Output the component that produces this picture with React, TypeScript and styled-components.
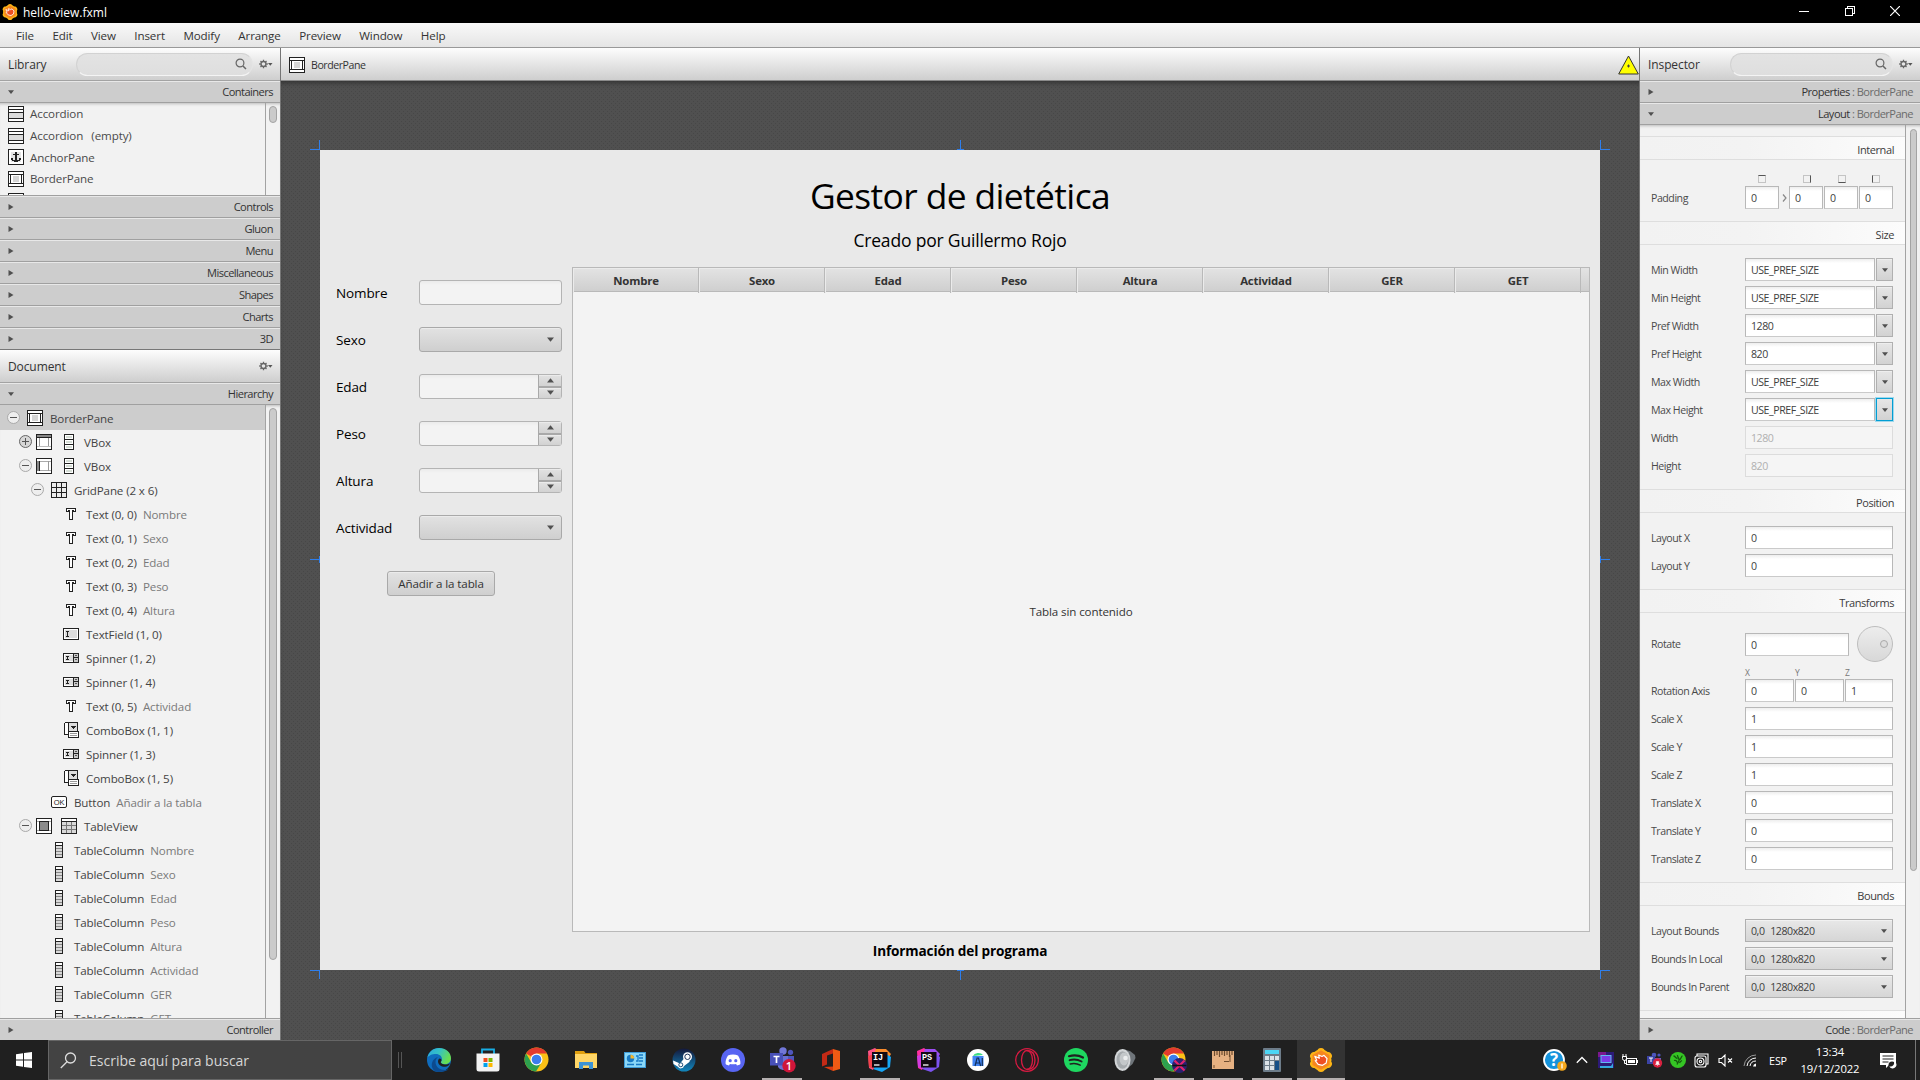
import React from "react";
import styled, { createGlobalStyle, css } from "styled-components";

const Global = createGlobalStyle`
  * { box-sizing: border-box; }
  html, body { margin: 0; padding: 0; overflow: hidden; }
  body { font-family: "Segoe UI", "Open Sans", "Noto Sans", sans-serif; color: #333; }
  svg { display: block; flex: none; }
`;

const regular = css`font-size: 11.6px; letter-spacing: -0.12px; white-space: pre;`;
const small = css`font-size: 10.6px; letter-spacing: -0.46px; white-space: pre;`;

/* ---------- shell ---------- */
const Screen = styled.div`width: 1920px; height: 1080px; display: flex; flex-direction: column; overflow: hidden; background: #f2f2f2;`;
const TitleBar = styled.div`height: 23px; background: #000; color: #fff; display: flex; align-items: center; padding: 0 2px; flex: none;`;
const WindowTitle = styled.span`font-size: 12px; letter-spacing: 0; margin-left: 5px; flex: 1; padding-top: 1px;`;
const WindowButton = styled.div`width: 45.5px; height: 23px; display: flex; align-items: center; justify-content: center; padding-bottom: 2px;`;
const MenuBar = styled.div`height: 25px; flex: none; display: flex; align-items: center; gap: 18.5px; padding: 1px 0 0 16px; background: linear-gradient(#f9f9f9, #e5e5e5); border-bottom: 1px solid #999; ${regular}`;
const Workspace = styled.div`height: 992px; display: flex; flex: none; overflow: hidden;`;
const LeftPanel = styled.div`width: 281px; border-right: 1px solid #757575; display: flex; flex-direction: column; background: #f2f2f2;`;
const CenterPanel = styled.div`width: 1358px; display: flex; flex-direction: column;`;
const RightPanel = styled.div`width: 281px; border-left: 1px solid #757575; display: flex; flex-direction: column; background: #f2f2f2;`;

const PanelHead = styled.div`height: 33px; flex: none; display: flex; align-items: center; padding: 0 7px 0 8px; background: linear-gradient(#fdfdfd, #cecece); border-bottom: 1px solid #a3a3a3; font-size: 12px; letter-spacing: -0.1px;`;
const HeadName = styled.span<{ $w: number }>`width: ${p => p.$w}px; padding-top: 1px;`;
const SearchBox = styled.div<{ $w: number }>`width: ${p => p.$w}px; height: 23px; margin-right: 6px; border-radius: 12px; border: 1px solid #d2d2d2; border-bottom-color: #f4f4f4; border-right-color: #e4e4e4; background: linear-gradient(#e3e3e3, #dedede); display: flex; align-items: center; justify-content: flex-end; padding: 0 5px 1px 0;`;
const Spacer = styled.div`flex: 1;`;

const Fold = styled.div<{ $dark?: boolean }>`height: 22px; flex: none; display: flex; align-items: center; justify-content: space-between; padding: 0 7px 1px 8px; background: #cdcdcd; border-top: 1px solid #e8e8e8; border-bottom: 1px solid ${p => (p.$dark ? "#777" : "#a0a0a0")}; font-size: 11.1px; line-height: 18px; letter-spacing: -0.55px; white-space: pre;`;
const Muted = styled.span`color: #6b6b6b;`;

const ScrollArea = styled.div<{ $h: number }>`height: ${p => p.$h}px; flex: none; display: flex; overflow: hidden; border-bottom: 1px solid #a0a0a0; box-shadow: inset 0 3px 3px -2px #bbb;`;
const ScrollContent = styled.div`flex: 1; overflow: hidden; border-right: 1px solid #a3a3a3;`;
const ScrollTrack = styled.div<{ $w: number; $top: number }>`width: ${p => p.$w}px; flex: none; display: flex; justify-content: center; padding-top: ${p => p.$top}px;`;
const Thumb = styled.div<{ $h: number; $w: number }>`width: ${p => p.$w}px; height: ${p => p.$h}px; border: 1px solid #a3a3a3; border-radius: 4px; background: #cbcbcb;`;

const LibraryList = styled.div`padding: 0 0 0 8px;`;
const LibraryRow = styled.div`height: 21.7px; display: flex; align-items: center; gap: 6px; color: #4a4a4a; word-spacing: 1.2px; ${regular}`;
const TreeRow = styled.div<{ $x: number; $sel?: boolean }>`height: ${p => (p.$sel ? 25 : 24)}px; padding-left: ${p => p.$x}px; display: flex; align-items: center; background: ${p => (p.$sel ? "#cdcdcd" : "transparent")}; color: #444; ${regular}`;
const TreeText = styled.span`margin-left: 7px; padding-top: 1px;`;
const TreeSub = styled.span`color: #7a7a7a; margin-left: 6px; padding-top: 1px;`;
const Gap = styled.span<{ $w: number }>`width: ${p => p.$w}px; flex: none;`;
const Disclosure = styled.span<{ $strong?: boolean }>`width: 13px; height: 13px; flex: none; border-radius: 50%; border: 1px solid ${p => (p.$strong ? "#666" : "#aaa")}; background: ${p => (p.$strong ? "#d6d6d6" : "#eee")}; display: flex; align-items: center; justify-content: center; margin-bottom: 1px;`;

/* ---------- canvas ---------- */
const Crumbs = styled.div`height: 33px; flex: none; display: flex; align-items: center; padding: 1px 0 0 8px; background: linear-gradient(#fdfdfd, #cecece); border-bottom: 1px solid #8a8a8a; gap: 6px; ${small}`;
const Backdrop = styled.div`flex: 1; display: flex; align-items: center; justify-content: center; padding-bottom: 1px;
  background-color: #505050;
  background-image: linear-gradient(#464646, #464646), linear-gradient(#464646, #464646);
  background-size: 4px 4px; background-position: 0 0, 2px 2px;
  background-image: radial-gradient(circle at 0.5px 0.5px, #474747 0.6px, transparent 0.7px), radial-gradient(circle at 0.5px 0.5px, #474747 0.6px, transparent 0.7px);
  box-shadow: inset 0 5px 5px -3px #333;`;
const Stage = styled.div`width: 1280px; height: 820px; position: relative; background: #e9e9e9; color: #000; padding: 19px 10px 0; display: flex; flex-direction: column; align-items: stretch;`;
const Mark = styled.i<{ $x: number; $y: number; $w: number; $h: number }>`position: absolute; left: ${p => p.$x}px; top: ${p => p.$y}px; width: ${p => p.$w}px; height: ${p => p.$h}px; background: #2f7fec;`;
const Title = styled.div`height: 53px; line-height: 52px; text-align: center; font-size: 35.4px; letter-spacing: -0.62px;`;
const Subtitle = styled.div`height: 45px; line-height: 37px; text-align: center; font-size: 17.5px; letter-spacing: -0.18px;`;
const Body = styled.div`display: flex; height: 665px; flex: none;`;
const Side = styled.div`width: 242px; padding: 13px 0 0 6px; display: flex; flex-direction: column; align-items: flex-start;`;
const FormGrid = styled.div`display: grid; grid-template-columns: 83px 143px; row-gap: 22px; align-items: center;`;
const FormLabel = styled.span`font-size: 13.5px; letter-spacing: -0.13px; padding-top: 1px;`;
const fieldBase = css`height: 25px; border: 1px solid #b4b4b4; border-radius: 3px; display: flex;`;
const FormInput = styled.div`${fieldBase} background: linear-gradient(#ebebeb, #f3f3f3 4px);`;
const FormCombo = styled.div`${fieldBase} border-color: #a9a9a9; background: linear-gradient(#e2e2e2, #cfcfcf); box-shadow: inset 0 1px 0 #ebebeb; align-items: center; justify-content: flex-end; padding-right: 7px;`;
const FormSpinner = styled(FormInput)`justify-content: flex-end;`;
const SpinButtons = styled.div`width: 23px; display: flex; flex-direction: column; border-left: 1px solid #a9a9a9;`;
const SpinHalf = styled.div`flex: 1; display: flex; align-items: center; justify-content: center; background: linear-gradient(#e2e2e2, #d2d2d2); box-shadow: inset 0 1px 0 #ebebeb; &:first-child { border-bottom: 2px solid #a9a9a9; }`;
const AddButton = styled.div`width: 108px; height: 25px; margin: 31px 0 0 51px; border: 1px solid #a9a9a9; border-radius: 3px; background: linear-gradient(#e2e2e2, #cfcfcf); box-shadow: inset 0 1px 0 #ebebeb; display: flex; align-items: center; justify-content: center; color: #333; ${regular}`;
const Table = styled.div`width: 1018px; border: 1px solid #b9b9b9; background: #f3f3f3; display: flex; flex-direction: column;`;
const TableHead = styled.div`height: 24px; display: grid; grid-template-columns: repeat(8, 126px) 8px; background: linear-gradient(#e3e3e3, #cfcfcf); border-bottom: 1px solid #b9b9b9;`;
const TableHeadCell = styled.div`border-right: 1px solid #b9b9b9; box-shadow: inset 1px 1px 0 #ebebeb; text-align: center; font-weight: 700; color: #333; line-height: 25px; padding-left: 1px; font-size: 11.4px; letter-spacing: -0.2px;`;
const TableBody = styled.div`flex: 1; display: flex; align-items: center; justify-content: center; color: #333; ${regular}`;
const Footer = styled.div`height: 38px; line-height: 38px; text-align: center; font-weight: 700; font-size: 13.6px; letter-spacing: -0.15px;`;

/* ---------- inspector ---------- */
const Section = styled.div<{ $h: number }>`height: ${p => p.$h}px; border: solid #dedede; border-width: 1px 0; background: linear-gradient(90deg, #f2f2f2, #f3f3f3 40%, #fcfcfc); display: flex; align-items: center; justify-content: flex-end; padding: 2px 11px 0 0; font-size: 11px; letter-spacing: -0.42px; color: #3c3c3c;`;
const Group = styled.div<{ $top: number; $bottom: number; $gap: number }>`padding: ${p => p.$top}px 12px ${p => p.$bottom}px 11px; display: flex; flex-direction: column; gap: ${p => p.$gap}px;`;
const Prop = styled.div<{ $h?: number }>`height: ${p => p.$h ?? 23}px; display: grid; grid-template-columns: 94px 148px; align-items: center; color: #4a4a4a; ${small}`;
const PropValue = styled.div<{ $gap?: number }>`display: flex; gap: ${p => p.$gap ?? 1}px; align-items: center; height: 100%;`;
const PropInput = styled.div<{ $w?: number; $off?: boolean }>`width: ${p => (p.$w ? p.$w + "px" : "100%")}; height: 23px; flex: none; display: flex; align-items: center; padding: 1px 0 0 5px; border: 1px solid ${p => (p.$off ? "#dcdcdc" : "#b8b8b8")}; border-bottom-color: ${p => (p.$off ? "#dcdcdc" : "#cacaca")}; background: ${p => (p.$off ? "#f5f5f5" : "linear-gradient(#eee, #fff 4px)")}; color: ${p => (p.$off ? "#b0b0b0" : "#404040")};`;
const DropButton = styled.div<{ $focus?: boolean }>`width: 17px; height: 23px; display: flex; align-items: center; justify-content: center; border: 1px solid ${p => (p.$focus ? "#039ed3" : "#b0b0b0")}; box-shadow: ${p => (p.$focus ? "0 0 0 1px #9fd8ec" : "inset 0 1px 0 #eee")}; background: linear-gradient(#e6e6e6, #d2d2d2);`;
const BoundsCombo = styled.div`width: 148px; height: 23px; border: 1px solid #b0b0b0; background: linear-gradient(#e8e8e8, #d6d6d6); box-shadow: inset 0 1px 0 #f2f2f2; display: flex; align-items: center; justify-content: space-between; padding: 1px 5px 0; color: #404040; word-spacing: 0.6px;`;
const SideIcons = styled.div`height: 8px; display: grid; grid-template-columns: 45px 35px 34px 8px; padding-left: 107px; margin-bottom: 3px;`;
const SideIcon = styled.span<{ $side: "top" | "right" | "bottom" | "left" }>`width: 8px; height: 8px; border: 1px solid #c4c4c4; border-${p => p.$side}-color: #555;`;
const Chevron = styled.span`width: 8px; color: #777; display: flex; justify-content: center;`;
const Knob = styled.div`width: 36px; height: 36px; margin-left: 7px; border-radius: 50%; border: 1px solid #bdbdbd; background: linear-gradient(#ededed, #d8d8d8); display: flex; align-items: center; justify-content: flex-end; padding-right: 4px; flex: none;`;
const KnobDot = styled.span`width: 8px; height: 8px; border: 1px solid #aaa; border-radius: 50%; background: #ddd;`;
const AxisNames = styled.div`display: grid; grid-template-columns: 50px 50px 48px; padding-left: 94px; height: 12px; font-size: 8.5px; line-height: 12px; color: #777;`;

/* ---------- taskbar ---------- */
const Taskbar = styled.div`height: 40px; flex: none; display: flex; background: #202020; color: #fff;`;
const StartButton = styled.div`width: 48px; display: flex; align-items: center; justify-content: center;`;
const TaskSearch = styled.div`width: 344px; display: flex; align-items: center; gap: 12px; padding-left: 11px; background: #434343; border: 1px solid #666; color: #d6d6d6; font-size: 14px; letter-spacing: 0; white-space: nowrap;`;
const Grip = styled.div`width: 4px; height: 16px; margin: 12px 13px 0 6px; border: solid #555; border-width: 0 1px;`;
const TaskItem = styled.div<{ $open?: boolean; $active?: boolean }>`width: 49px; padding-right: 1px; display: flex; align-items: center; justify-content: center; background: ${p => (p.$active ? "linear-gradient(90deg,#333 48px,transparent 48px)" : "none")};
  position: relative;
  &::after { content: ""; display: ${p => (p.$open ? "block" : "none")}; position: absolute; bottom: 0; left: ${p => (p.$active ? 0 : 4)}px; width: ${p => (p.$active ? 48 : 40)}px; height: 2px; background: #b5b0b0; }`;
const Tray = styled.div`margin-left: auto; display: flex; align-items: center;`;
const TrayItem = styled.div<{ $w: number }>`width: ${p => p.$w}px; display: flex; align-items: center; justify-content: center;`;
const Lang = styled.span`width: 30px; font-size: 10.8px; letter-spacing: -0.2px; text-align: center;`;
const Clock = styled.div`width: 70px; margin: 0 7px 0 2px; text-align: center; font-size: 11.3px; letter-spacing: -0.1px; line-height: 17px;`;
const DesktopEdge = styled.div`width: 5px; height: 40px; border-left: 1px solid #777;`;

/* ---------- icons ---------- */
const K = "#222";
const Px = ({ children, s = 16 }: { children: React.ReactNode; s?: number }) => (
  <svg width={s} height={s} viewBox={`0 0 ${s} ${s}`} shapeRendering="crispEdges">{children}</svg>
);
const Box = (p: { x: number; y: number; w: number; h: number; f?: string; c?: string }) => (
  <rect x={p.x + 0.5} y={p.y + 0.5} width={p.w - 1} height={p.h - 1} fill={p.f ?? "#fff"} stroke={p.c ?? K} />
);
const R = (p: { x: number; y: number; w: number; h: number; f?: string }) => <rect x={p.x} y={p.y} width={p.w} height={p.h} fill={p.f ?? K} />;

const icons: Record<string, React.ReactNode> = {
  accordion: <Px><Box x={0} y={0} w={16} h={16} /><R x={1} y={3} w={14} h={1} /><R x={1} y={6} w={14} h={1} /><R x={1} y={7} w={14} h={5} f="#dcdcdc" /><R x={1} y={12} w={14} h={1} /></Px>,
  anchor: <Px><Box x={0} y={0} w={16} h={16} /><R x={3} y={3} w={10} h={10} f="#e4e4e4" /><R x={7} y={3} w={2} h={10} /><R x={5} y={5} w={6} h={1} /><R x={3} y={9} w={2} h={2} /><R x={11} y={9} w={2} h={2} /><R x={4} y={11} w={3} h={1} /><R x={9} y={11} w={3} h={1} /><R x={6} y={12} w={4} h={1} /></Px>,
  border: <Px><Box x={0} y={0} w={16} h={16} /><R x={1} y={3} w={14} h={1} /><R x={1} y={12} w={14} h={1} /><R x={2} y={3} w={1} h={10} /><R x={13} y={3} w={1} h={10} /><R x={5} y={5} w={6} h={6} f="#d5d5d5" /></Px>,
  top: <Px><Box x={0} y={0} w={16} h={16} /><R x={1} y={1} w={14} h={3} f="#888" /><R x={1} y={3} w={14} h={1} /><R x={3} y={4} w={1} h={9} f="#999" /><R x={12} y={4} w={1} h={9} f="#999" /><R x={1} y={12} w={14} h={1} f="#bbb" /></Px>,
  left: <Px><Box x={0} y={0} w={16} h={16} /><R x={1} y={3} w={14} h={1} f="#aaa" /><R x={1} y={12} w={14} h={1} f="#aaa" /><R x={1} y={3} w={3} h={10} f="#888" /><R x={3} y={3} w={1} h={10} /><R x={12} y={3} w={1} h={10} f="#999" /></Px>,
  center: <Px><Box x={0} y={0} w={16} h={16} /><R x={1} y={3} w={14} h={1} f="#aaa" /><R x={1} y={12} w={14} h={1} f="#aaa" /><Box x={3} y={3} w={10} h={10} f="#8c8c8c" /></Px>,
  vbox: <Px><Box x={3} y={0} w={10} h={16} /><R x={3} y={5} w={10} h={1} /><R x={3} y={10} w={10} h={1} /><R x={5} y={2} w={6} h={2} f="#d5ddd5" /><R x={5} y={7} w={6} h={2} f="#d5ddd5" /><R x={5} y={12} w={6} h={2} f="#d5ddd5" /></Px>,
  grid: <Px><Box x={0} y={0} w={16} h={16} f="#ececec" /><R x={5} y={0} w={1} h={16} /><R x={10} y={0} w={1} h={16} /><R x={0} y={5} w={16} h={1} /><R x={0} y={10} w={16} h={1} /></Px>,
  text: <Px><path d="M3.5 2.5h9v3h-2v-1h-1v9h-3v-9h-1v1h-2z" fill="#fff" stroke={K} /></Px>,
  field: <Px><Box x={0} y={2} w={16} h={12} /><R x={2} y={4} w={12} h={8} f="#dcdcdc" /><R x={3} y={5} w={3} h={1} /><R x={4} y={5} w={1} h={6} /><R x={3} y={10} w={3} h={1} /></Px>,
  spinner: <Px><Box x={0} y={3} w={16} h={10} /><R x={2} y={5} w={8} h={6} f="#dcdcdc" /><R x={3} y={6} w={3} h={1} /><R x={4} y={6} w={1} h={4} /><R x={3} y={9} w={3} h={1} /><R x={10} y={4} w={1} h={8} /><R x={11} y={4} w={4} h={8} f="#c8c8c8" /><R x={11} y={7} w={4} h={1} /><R x={12} y={5} w={2} h={1} f="#555" /><R x={12} y={9} w={2} h={1} f="#555" /></Px>,
  combo: <Px><rect x="1.5" y=".5" width="13" height="12" rx="1.5" fill="#fff" stroke={K} /><R x={6} y={1} w={8} h={9} f="#ddd" /><R x={5} y={1} w={1} h={12} /><path d="M8 4h5l-2.500 3.500z" fill={K} /><Box x={5} y={9} w={11} h={7} /><R x={7} y={11} w={7} h={1} f="#999" /><R x={7} y={13} w={7} h={1} f="#999" /></Px>,
  button: <svg width="16" height="16"><rect x=".5" y="2.500" width="15" height="11" rx="1.500" fill="#fff" stroke={K} /><text x="8" y="11" fontSize="7.500" textAnchor="middle" fill={K} fontFamily="Liberation Sans">OK</text></svg>,
  table: <Px><Box x={0} y={0} w={16} h={16} f="#d8d8d8" /><R x={1} y={1} w={14} h={3} f="#fff" /><R x={1} y={3} w={14} h={1} /><R x={1} y={7} w={14} h={1} f="#777" /><R x={1} y={11} w={14} h={1} f="#777" /><R x={5} y={4} w={1} h={11} f="#777" /><R x={10} y={4} w={1} h={11} f="#777" /></Px>,
  column: <Px><Box x={4} y={0} w={8} h={16} f="#d8d8d8" /><R x={5} y={1} w={6} h={2} f="#fff" /><R x={5} y={3} w={6} h={1} /><R x={5} y={6} w={6} h={1} f="#888" /><R x={5} y={9} w={6} h={1} f="#888" /><R x={5} y={12} w={6} h={1} f="#888" /></Px>,
};

const Arrow = ({ dir, s = 6, c = "#505050" }: { dir: "down" | "up" | "right"; s?: number; c?: string }) => (
  <svg width={s} height={s} viewBox="0 0 6 6"><path fill={c} d={dir === "down" ? "M0 1.200h6L3 4.900z" : dir === "up" ? "M0 4.800h6L3 1.100z" : "M.5 0v6l5-3z"} /></svg>
);
const Magnifier = () => <svg width="12" height="12" viewBox="0 0 12 12" fill="none" stroke="#666"><circle cx="5" cy="5" r="3.900" strokeWidth="1.200" /><path d="M8 8l3 3" strokeWidth="1.500" /></svg>;
const Gear = () => (
  <svg width="14" height="10" viewBox="0 0 14 10"><circle cx="4.500" cy="5" r="2.500" fill="none" stroke="#666" strokeWidth="1.400" /><path d="M4.500.700v1.400M4.500 7.900v1.400M.2 5h1.400M7.400 5h1.400M1.500 2l1 1M6.500 7l1 1M7.500 2l-1 1M2.500 7l-1 1" stroke="#666" strokeWidth="1.300" /><path d="M9 4h4.500l-2.200 2.800z" fill="#555" /></svg>
);
const SceneIcon = ({ s }: { s: number }) => (
  <svg width={s} height={s} viewBox="0 0 24 24">
    <g fill="#fdb515"><circle cx="12" cy="12" r="10.500" />{[0, 60, 120, 180, 240, 300].map(a => <circle key={a} cx="12" cy="3.800" r="3.800" transform={`rotate(${a} 12 12)`} />)}</g>
    <path d="M12 2.200l8.500 4.900v9.800L12 21.800l-8.500-4.900V7.100z" fill="#f6861f" />
    <path d="M5.800 8.300l4.500 2-.6-3.300 3.300 1.500 2-1.200 3 3.200-.8 4.500-3.700 2.300-4.300-1-3-3.600 1.600-.5z" fill="#ee4f23" stroke="#fff" strokeWidth="1.200" strokeLinejoin="round" />
  </svg>
);

/* ---------- taskbar drawings ---------- */
const Chrome = ({ badge }: { badge?: boolean }) => (
  <svg width="26" height="26" viewBox="0 0 26 26"><circle cx="12.500" cy="12.500" r="12" fill="#fbc116" /><path d="M12.500 12.500L2.100 6.500A12 12 0 0 1 22.900 6.500H12.500z" fill="#e33b2e" /><path d="M2.100 6.500A12 12 0 0 0 12 24.500L17.500 15.500 12.500 12.500 7.300 15.500z" fill="#2da04e" /><circle cx="12.500" cy="12.500" r="6" fill="#fff" /><circle cx="12.500" cy="12.500" r="4.800" fill="#3b7ded" />
    {badge && <g><circle cx="18.500" cy="18.500" r="7.500" fill="#2b2170" /><path d="M13.500 13.500l10 10M23.500 13.500l-10 10" stroke="#e0246c" strokeWidth="2.200" /><path d="M11.500 18.500h14" stroke="#111" strokeWidth="1.500" /></g>}
  </svg>
);
const JetBrains = ({ t, c }: { t: string; c: string[] }) => (
  <svg width="24" height="24" viewBox="0 0 24 24"><path d="M0 3l7-3 5 4L5 22 1 20z" fill={c[0]} /><path d="M8 1l10 0 5 5-3 5L6 6z" fill={c[1]} /><path d="M17 5l6 4-1 10-8 5-9-3z" fill={c[2]} /><path d="M0 8l6-2v15l-5-2z" fill={c[3]} /><rect x="4" y="4" width="15.500" height="15.500" fill="#120a12" /><text x="5" y="12" fontSize="8.500" fontWeight="700" fill="#fff" fontFamily="Liberation Mono">{t}</text><path d="M6 17h5.500" stroke="#fff" strokeWidth="1.300" /></svg>
);
const taskIcons: { icon: React.ReactNode; open?: boolean; active?: boolean }[] = [
  { icon: <svg width="24" height="24" viewBox="0 0 24 24"><defs><linearGradient id="edgeTop" x1="0" y1="0" x2="1" y2=".4"><stop offset="0" stopColor="#2aa6e0" /><stop offset=".5" stopColor="#35c1c6" /><stop offset="1" stopColor="#67de52" /></linearGradient></defs><circle cx="12" cy="12" r="12" fill="#0f6cbd" /><path d="M.3 10C1.500 4 6 0 12 0c7 0 12 4.800 12 10.200 0 3.600-2.700 6-6 6-2.500 0-4-.9-4-2 0-.8 1-1.300 1-3C15 8.500 12.500 6 9 6 5 6 1.500 7.500.3 10z" fill="url(#edgeTop)" /><path d="M8.500 14c0 5 4.500 8 9 8 2 0 3.500-.7 4.600-1.300C20 23 16 24 12 24 6 24 4 19 5 15c.7-3.500 3.500-5.500 6-6-1.500 1-2.500 3-2.500 5z" fill="#0c4a8e" /><path d="M11 13.500c0-1.200.5-2.500 1.500-3 1.500.3 2 1 2 1.700 0 .8-.8 1.300-.8 2 0 1.200 2 2.300 4.300 2.300 2 0 3.800-.6 4.900-1.300-.5 2-2.500 3.600-4.900 3.600-4 0-7-2.300-7-5.300z" fill="#202020" /></svg> },
  { icon: <svg width="24" height="24" viewBox="0 0 24 24"><path d="M6 7V1.500h12V7" fill="none" stroke="#18aee5" strokeWidth="1.800" /><path d="M.5 5.500h23V21a2.500 2.500 0 0 1-2.500 2.500H3A2.500 2.500 0 0 1 .5 21z" fill="#f3f3f3" /><path d="M7.500 10h4v4h-4z" fill="#f04e1f" /><path d="M12.500 10h4v4h-4z" fill="#7db800" /><path d="M7.500 15h4v4h-4z" fill="#00a1ec" /><path d="M12.500 15h4v4h-4z" fill="#fdb700" /></svg> },
  { icon: <Chrome /> },
  { icon: <svg width="22" height="18" viewBox="0 0 22 18"><path d="M0 0h9l1.500 2H22v5H0z" fill="#e0a010" /><path d="M0 3h22v14H0z" fill="#ffd667" /><path d="M4 18v-7h14v7h-4v-3.500H8V18z" fill="#3d93d4" /></svg> },
  { icon: <svg width="22" height="16" viewBox="0 0 22 16"><rect x=".5" y=".5" width="21" height="15" fill="#8ad7f7" stroke="#3e9cd8" /><circle cx="6.500" cy="6.500" r="3.700" fill="#1779c4" /><path d="M6.500 6.500V2.800a3.700 3.700 0 0 1 3.700 3.700z" fill="#f6b62c" /><path d="M12 4h2v5h-2M15 3h4M15 6h4M15 9h4M3 12.500h7M12 12.500h6" stroke="#1779c4" strokeWidth="1.300" fill="none" /></svg> },
  { icon: <svg width="24" height="24" viewBox="0 0 24 24"><defs><linearGradient id="steam" x1="0" y1="0" x2="0" y2="1"><stop offset="0" stopColor="#14183a" /><stop offset="1" stopColor="#1287bd" /></linearGradient></defs><circle cx="12" cy="12" r="11.500" fill="url(#steam)" /><path d="M1 12.500l7 3 4-5 6 3-6 4.500a3.300 3.300 0 0 1-6 .8L1.500 16z" fill="#fff" /><circle cx="15.500" cy="8.800" r="4.500" fill="#fff" /><circle cx="15.500" cy="8.800" r="2.700" fill="#fff" stroke="#1b3357" /><circle cx="8.800" cy="16.800" r="2" fill="#fff" stroke="#1b4c77" /></svg> },
  { icon: <svg width="24" height="24" viewBox="0 0 24 24"><circle cx="12" cy="12" r="12" fill="#5865f2" /><path d="M7 7.500c3-1.300 7-1.300 10 0 1.700 2.500 2.700 5.500 2.400 8.500-1.200 1-2.400 1.300-3.400 1.500l-.9-1.600c-2 .5-4.200.5-6.200 0L8 17.500c-1-.2-2.200-.5-3.400-1.500C4.300 13 5.300 10 7 7.500z" fill="#fff" /><circle cx="9.200" cy="12.700" r="1.600" fill="#5865f2" /><circle cx="14.800" cy="12.700" r="1.600" fill="#5865f2" /></svg> },
  { open: true, icon: <svg width="28" height="26" viewBox="0 0 28 26"><circle cx="15" cy="4" r="3.700" fill="#7177d8" /><circle cx="22.500" cy="5.300" r="2.600" fill="#4f56bd" /><path d="M10 9h11v9a6 6 0 0 1-11 2z" fill="#6a70d4" /><path d="M20 9h6v7a4 4 0 0 1-6 3z" fill="#4f56bd" /><rect x="2" y="6" width="13" height="12.500" fill="#4850b8" /><path d="M5.500 9.500h6M8.500 9.500V16" stroke="#fff" strokeWidth="1.700" /><circle cx="21" cy="18.800" r="6.700" fill="#d0163a" /><text x="21" y="22.700" fontSize="11" fontWeight="600" fill="#fff" textAnchor="middle">1</text></svg> },
  { icon: <svg width="18" height="22" viewBox="0 0 18 22"><path d="M11 0l7 2v18l-7 2z" fill="#f05a14" /><path d="M0 5l11-5v4.500L5 6.500v9L0 17.500z" fill="#c42a16" /><path d="M2 18l9-.5V22z" fill="#d93b12" /></svg> },
  { open: true, icon: <JetBrains t="IJ" c={["#fe5286", "#f98b2b", "#16a5f5", "#f5424a"]} /> },
  { icon: <JetBrains t="PS" c={["#ff2fa0", "#9c4df2", "#7c52f0", "#d13ce0"]} /> },
  { icon: <svg width="22" height="22" viewBox="0 0 22 22"><circle cx="11" cy="11" r="11" fill="#fff" /><path d="M6 7a5.500 4 0 0 1 10-1z" fill="#3ddc84" /><rect x="5.500" y="7" width="11" height="10" fill="#4285f4" /><path d="M8 17l2.100-8h1.400l2.100 8M9 14h4M15.300 9v8" stroke="#12305b" strokeWidth="1.200" fill="none" /></svg> },
  { icon: <svg width="24" height="24" viewBox="0 0 24 24" fill="none" stroke="#d81a42" strokeWidth="1.300"><circle cx="12" cy="12" r="11.300" /><ellipse cx="12" cy="12" rx="5.500" ry="9.500" /><path d="M12 2.500c7 0 8 5 8 9.500s-1 9.500-8 9.500" /></svg> },
  { icon: <svg width="24" height="24" viewBox="0 0 24 24" fill="none" stroke="#202020" strokeLinecap="round"><circle cx="12" cy="12" r="12" fill="#1ed760" stroke="none" /><path d="M5 8.200c4.500-1.300 10-.9 14 1.300" strokeWidth="2.200" /><path d="M5.600 12.200c4-1.100 8.500-.6 12 1.300" strokeWidth="1.900" /><path d="M6.200 15.900c3.500-.8 7-.5 10 1.200" strokeWidth="1.500" /></svg> },
  { icon: <svg width="22" height="24" viewBox="0 0 22 24"><path d="M8 1l8 2 5 4 .5 3-3 6-8 7z" fill="#6f757a" /><ellipse cx="8.500" cy="12" rx="8" ry="11" fill="#d3d6d8" /><ellipse cx="8.500" cy="12" rx="6" ry="8.700" fill="#a6abae" /><ellipse cx="10" cy="11" rx="4.500" ry="6.500" fill="#c4c8ca" /><circle cx="11.500" cy="10" r="2.300" fill="#eceeef" /></svg> },
  { open: true, icon: <Chrome badge /> },
  { open: true, icon: <svg width="22" height="20" viewBox="0 0 22 20"><path d="M0 1h22v18H0z" fill="#e6b182" /><path d="M2.500 1v5M5 1v4M7.500 1v6M10 1v4M12.500 1v5M15 1v4M17.500 1v6M20 1v4" stroke="#6e4c2f" strokeWidth="1.200" /><path d="M18 5v7M12 11.500h5M2 15v3" stroke="#6e4c2f" /></svg> },
  { open: true, icon: <svg width="18" height="24" viewBox="0 0 18 24"><rect width="18" height="24" rx="1" fill="#6d7c89" /><rect x="2" y="2" width="14" height="4" fill="#4cd6f5" />{[0, 1, 2].map(r => [0, 1, 2].map(c => <rect key={`${r}${c}`} x={2 + c * 5} y={8 + r * 5} width="4" height="4" fill={c === 2 && r > 0 ? "#154f88" : "#dbe2e8"} />))}<rect x="12" y="13" width="4" height="9" fill="#154f88" /></svg> },
  { open: true, active: true, icon: <SceneIcon s={24} /> },
];

const W = "#fff";
const trayIcons: { w: number; icon: React.ReactNode }[] = [
  { w: 30, icon: <svg width="24" height="24" viewBox="0 0 24 24"><circle cx="11" cy="12" r="10" fill="#1593dc" stroke="#fff" strokeWidth="1.800" /><text x="11" y="18" fontSize="17" fontWeight="700" fill="#fff" textAnchor="middle">?</text><circle cx="19" cy="18" r="4.800" fill="#f5a81c" /><path d="M19 15.500v5" stroke="#fff" strokeWidth="1.300" /></svg> },
  { w: 24, icon: <svg width="12" height="8" viewBox="0 0 12 8"><path d="M.8 6.800L6 1.500l5.200 5.300" fill="none" stroke={W} strokeWidth="1.300" /></svg> },
  { w: 24, icon: <svg width="16" height="16" viewBox="0 0 16 16"><rect width="16" height="16" fill="#2c1a78" /><path d="M0 0h8v5H0z" fill="#7b178f" /><rect x="3" y="3.500" width="10" height="7" fill="#7c3be8" stroke="#62b9ef" /><path d="M2 14h11l2-3v5H2z" fill="#36a9de" /></svg> },
  { w: 24, icon: <svg width="16" height="16" viewBox="0 0 16 16" fill="none" stroke={W}><rect x="4.500" y="6.500" width="10" height="6" /><path d="M6 8h7v3H6z" fill={W} stroke="none" /><path d="M15.500 8v3M1 2v3M4 2v3M.5 4.500h4v2a2 2 0 0 1-4 0zM2.500 8v3.500H4" /></svg> },
  { w: 24, icon: <svg width="17" height="16" viewBox="0 0 17 16"><circle cx="8" cy="3" r="2.300" fill="#4d55bd" /><circle cx="13" cy="3" r="1.600" fill="#4d55bd" /><path d="M6 6h9v6H8z" fill="#5c64ca" /><rect x="1" y="4" width="8" height="8" fill="#3b43a5" /><path d="M3 6h4M5 6v4" stroke="#fff" /><circle cx="11.500" cy="11" r="4.700" fill="#d9213f" /><path d="M9.500 12.500h4l-.8-1.300V9.500h-2.400v1.700zM11 13.500h1" fill="#fff" stroke="#fff" strokeWidth=".5" /></svg> },
  { w: 24, icon: <svg width="16" height="16" viewBox="0 0 16 16"><circle cx="8" cy="8" r="8" fill="#35c524" /><path d="M3.500 4c2 0 2 2.500 4 2.500M7.500 3c-.5 2 2 3 1.500 5.500L7 12.500M12.500 4c-1.500 0-1 3-3.500 4M4 8.500c1.500-.5 3 0 3 2M12 8.500c-1 .5-2 1-2.500 2.500" fill="none" stroke="#145a0d" strokeWidth="1.300" /></svg> },
  { w: 23, icon: <svg width="15" height="15" viewBox="0 0 15 15" fill="none" stroke={W} strokeWidth="1.100"><path d="M3 3V1h11v10h-2" /><rect x="1" y="3" width="11" height="11" rx="2" /><circle cx="6.500" cy="8.500" r="3.500" /><circle cx="6.500" cy="8.500" r="1.200" /></svg> },
  { w: 24, icon: <svg width="15" height="13" viewBox="0 0 15 13" fill="none" stroke={W} strokeWidth="1.100"><path d="M1 4.500h2.500L7 1v11L3.500 8.500H1zM10 4.500l4 4M14 4.500l-4 4" /></svg> },
  { w: 26, icon: <svg width="14" height="14" viewBox="0 0 14 14" fill="none" stroke={W}><path d="M1 13A12 12 0 0 1 13 2" stroke="#999" /><path d="M4 13a9 9 0 0 1 9-8M7 13a6 6 0 0 1 6-5" /><path d="M10 13.500a3.500 3.500 0 0 1 3-3v3z" fill={W} stroke="none" /></svg> },
];

/* ---------- data ---------- */
type Node = { x: number; disc?: "+" | "-"; gap?: number; icons: string[]; text: string; sub?: string };
const textNode = (t: string, sub: string): Node => ({ x: 63, icons: ["text"], text: t, sub });
const leaf = (icon: string, text: string): Node => ({ x: 63, icons: [icon], text });
const tree: Node[] = [
  { x: 7, disc: "-", gap: 7, icons: ["border"], text: "BorderPane" },
  { x: 19, disc: "+", gap: 4, icons: ["top", "vbox"], text: "VBox" },
  { x: 19, disc: "-", gap: 4, icons: ["left", "vbox"], text: "VBox" },
  { x: 31, disc: "-", gap: 7, icons: ["grid"], text: "GridPane (2 x 6)" },
  textNode("Text (0, 0)", "Nombre"), textNode("Text (0, 1)", "Sexo"), textNode("Text (0, 2)", "Edad"), textNode("Text (0, 3)", "Peso"), textNode("Text (0, 4)", "Altura"),
  leaf("field", "TextField (1, 0)"), leaf("spinner", "Spinner (1, 2)"), leaf("spinner", "Spinner (1, 4)"),
  textNode("Text (0, 5)", "Actividad"),
  leaf("combo", "ComboBox (1, 1)"), leaf("spinner", "Spinner (1, 3)"), leaf("combo", "ComboBox (1, 5)"),
  { x: 51, icons: ["button"], text: "Button", sub: "Añadir a la tabla" },
  { x: 19, disc: "-", gap: 4, icons: ["center", "table"], text: "TableView" },
  ...["Nombre", "Sexo", "Edad", "Peso", "Altura", "Actividad", "GER", "GET"].map(sub => ({ x: 51, icons: ["column"], text: "TableColumn", sub })),
];
const library: [string, string][] = [["accordion", "Accordion"], ["accordion", "Accordion  (empty)"], ["anchor", "AnchorPane"], ["border", "BorderPane"], ["border", ""]];
const sizes: [string, string, boolean?][] = [["Min Width", "USE_PREF_SIZE"], ["Min Height", "USE_PREF_SIZE"], ["Pref Width", "1280"], ["Pref Height", "820"], ["Max Width", "USE_PREF_SIZE"], ["Max Height", "USE_PREF_SIZE", true]];
const form: [string, "input" | "combo" | "spinner"][] = [["Nombre", "input"], ["Sexo", "combo"], ["Edad", "spinner"], ["Peso", "spinner"], ["Altura", "spinner"], ["Actividad", "combo"]];
const marks = [
  [-10, -1, 9, 1], [-1, -10, 1, 10], [1281, -1, 9, 1], [1280, -10, 1, 10],
  [-10, 820, 9, 1], [-1, 820, 1, 9], [1281, 820, 9, 1], [1280, 820, 1, 9],
  [-10, 409, 9, 1], [-1, 406, 1, 7], [1281, 409, 9, 1], [1280, 406, 1, 7],
  [640, -10, 1, 9], [637, -1, 7, 1], [640, 821, 1, 9], [637, 820, 7, 1],
];

const TreeItem = ({ n, sel }: { n: Node; sel: boolean }) => (
  <TreeRow $x={n.x} $sel={sel}>
    {n.disc && <><Disclosure $strong={n.disc === "+"}><Px s={7}><R x={0} y={3} w={7} h={1} f="#555" />{n.disc === "+" && <R x={3} y={0} w={1} h={7} f="#555" />}</Px></Disclosure><Gap $w={n.gap!} /></>}
    {n.icons.map((i, k) => <React.Fragment key={i}>{k > 0 && <Gap $w={9} />}{icons[i]}</React.Fragment>)}
    <TreeText>{n.text}</TreeText>
    {n.sub && <TreeSub>{n.sub}</TreeSub>}
  </TreeRow>
);
const FoldBar = ({ name, open, of, dark }: { name: string; open?: boolean; of?: string; dark?: boolean }) => (
  <Fold $dark={dark}><Arrow dir={open ? "down" : "right"} /><span>{name}{of && <Muted> : {of}</Muted>}</span></Fold>
);
const Field = ({ name, value, off }: { name: string; value: string; off?: boolean }) => (
  <Prop><span>{name}</span><PropInput $off={off}>{value}</PropInput></Prop>
);

export default function App() {
  return (
    <Screen>
      <Global />
      <TitleBar>
        <SceneIcon s={16} /><WindowTitle>hello-view.fxml</WindowTitle>
        <WindowButton><Px s={10}><R x={0} y={5} w={10} h={1} f="#fff" /></Px></WindowButton>
        <WindowButton><Px s={10}><path d="M2.500 2.500v-2h7v7h-2M.5 2.500h7v7h-7z" fill="none" stroke="#fff" /></Px></WindowButton>
        <WindowButton><svg width="10" height="10"><path d="M0 0l10 10M10 0L0 10" stroke="#fff" strokeWidth="1.200" /></svg></WindowButton>
      </TitleBar>
      <MenuBar>{["File", "Edit", "View", "Insert", "Modify", "Arrange", "Preview", "Window", "Help"].map(m => <span key={m}>{m}</span>)}</MenuBar>
      <Workspace>
        <LeftPanel>
          <PanelHead><HeadName $w={68}>Library</HeadName><SearchBox $w={177}><Magnifier /></SearchBox><Gear /></PanelHead>
          <FoldBar name="Containers" open />
          <ScrollArea $h={93}>
            <ScrollContent><LibraryList>{library.map(([i, t], k) => <LibraryRow key={k}>{icons[i]}{t}</LibraryRow>)}</LibraryList></ScrollContent>
            <ScrollTrack $w={14} $top={3}><Thumb $h={17} $w={8} /></ScrollTrack>
          </ScrollArea>
          <FoldBar name="Controls" /><FoldBar name="Gluon" /><FoldBar name="Menu" /><FoldBar name="Miscellaneous" /><FoldBar name="Shapes" /><FoldBar name="Charts" /><FoldBar name="3D" dark />
          <PanelHead><HeadName $w={80}>Document</HeadName><Spacer /><Gear /></PanelHead>
          <FoldBar name="Hierarchy" open />
          <ScrollArea $h={614}>
            <ScrollContent>{tree.map((n, k) => <TreeItem key={k} n={n} sel={k === 0} />)}</ScrollContent>
            <ScrollTrack $w={14} $top={3}><Thumb $h={552} $w={8} /></ScrollTrack>
          </ScrollArea>
          <FoldBar name="Controller" />
        </LeftPanel>

        <CenterPanel>
          <Crumbs>{icons.border}<span>BorderPane</span><Spacer />
            <svg width="21" height="20" viewBox="0 0 21 20"><path d="M10.500 1L20.300 19H.7z" fill="#ff0" stroke="#333" /><path d="M9 11h3M10.500 9.500v3" stroke="#444" /></svg>
          </Crumbs>
          <Backdrop>
            <Stage>
              {marks.map(([x, y, w, h], k) => <Mark key={k} $x={x} $y={y} $w={w} $h={h} />)}
              <Title>Gestor de dietética</Title>
              <Subtitle>Creado por Guillermo Rojo</Subtitle>
              <Body>
                <Side>
                  <FormGrid>
                    {form.map(([name, kind]) => (
                      <React.Fragment key={name}>
                        <FormLabel>{name}</FormLabel>
                        {kind === "input" && <FormInput />}
                        {kind === "combo" && <FormCombo><Arrow dir="down" s={7} /></FormCombo>}
                        {kind === "spinner" && <FormSpinner><SpinButtons><SpinHalf><Arrow dir="up" s={7} /></SpinHalf><SpinHalf><Arrow dir="down" s={7} /></SpinHalf></SpinButtons></FormSpinner>}
                      </React.Fragment>
                    ))}
                  </FormGrid>
                  <AddButton>Añadir a la tabla</AddButton>
                </Side>
                <Table>
                  <TableHead>{["Nombre", "Sexo", "Edad", "Peso", "Altura", "Actividad", "GER", "GET"].map(c => <TableHeadCell key={c}>{c}</TableHeadCell>)}</TableHead>
                  <TableBody>Tabla sin contenido</TableBody>
                </Table>
              </Body>
              <Footer>Información del programa</Footer>
            </Stage>
          </Backdrop>
        </CenterPanel>

        <RightPanel>
          <PanelHead><HeadName $w={82}>Inspector</HeadName><SearchBox $w={163}><Magnifier /></SearchBox><Gear /></PanelHead>
          <FoldBar name="Properties" of="BorderPane" /><FoldBar name="Layout" of="BorderPane" open />
          <ScrollArea $h={894}>
            <ScrollContent>
              <Group $top={0} $bottom={11} $gap={0} />
              <Section $h={24}>Internal</Section>
              <Group $top={15} $bottom={12} $gap={0}>
                <SideIcons><SideIcon $side="top" /><SideIcon $side="right" /><SideIcon $side="bottom" /><SideIcon $side="left" /></SideIcons>
                <Prop><span>Padding</span><PropValue><PropInput $w={34}>0</PropInput><Chevron><svg width="5" height="8"><path d="M1 .5L4 4 1 7.500" fill="none" stroke="#888" strokeWidth="1.200" /></svg></Chevron><PropInput $w={34}>0</PropInput><PropInput $w={34}>0</PropInput><PropInput $w={34}>0</PropInput></PropValue></Prop>
              </Group>
              <Section $h={24}>Size</Section>
              <Group $top={13} $bottom={12} $gap={5}>
                {sizes.map(([n, v, f]) => <Prop key={n}><span>{n}</span><PropValue><PropInput $w={130}>{v}</PropInput><DropButton $focus={f}><Arrow dir="down" /></DropButton></PropValue></Prop>)}
                <Field name="Width" value="1280" off /><Field name="Height" value="820" off />
              </Group>
              <Section $h={24}>Position</Section>
              <Group $top={13} $bottom={12} $gap={5}><Field name="Layout X" value="0" /><Field name="Layout Y" value="0" /></Group>
              <Section $h={24}>Transforms</Section>
              <Group $top={13} $bottom={12} $gap={5}>
                <Prop $h={36}><span>Rotate</span><PropValue><PropInput $w={104}>0</PropInput><Knob><KnobDot /></Knob></PropValue></Prop>
                <div>
                  <AxisNames><span>X</span><span>Y</span><span>Z</span></AxisNames>
                  <Prop><span>Rotation Axis</span><PropValue><PropInput $w={49}>0</PropInput><PropInput $w={49}>0</PropInput><PropInput $w={48}>1</PropInput></PropValue></Prop>
                </div>
                {["Scale X", "Scale Y", "Scale Z"].map(n => <Field key={n} name={n} value="1" />)}
                {["Translate X", "Translate Y", "Translate Z"].map(n => <Field key={n} name={n} value="0" />)}
              </Group>
              <Section $h={24}>Bounds</Section>
              <Group $top={13} $bottom={12} $gap={5}>
                {["Layout Bounds", "Bounds In Local", "Bounds In Parent"].map(n => <Prop key={n}><span>{n}</span><BoundsCombo><span>0,0  1280x820</span><Arrow dir="down" s={6} /></BoundsCombo></Prop>)}
              </Group>
              <Section $h={24} />
            </ScrollContent>
            <ScrollTrack $w={14} $top={4}><Thumb $h={742} $w={7} /></ScrollTrack>
          </ScrollArea>
          <FoldBar name="Code" of="BorderPane" />
        </RightPanel>
      </Workspace>

      <Taskbar>
        <StartButton><svg width="16" height="16" viewBox="0 0 16 16" fill="#fff"><path d="M0 2.200l7-1v6.300H0zM8 1l8-1v7.500H8zM0 8.500h7v6.300l-7-1zM8 8.500h8V16l-8-1z" /></svg></StartButton>
        <TaskSearch><svg width="17" height="17" viewBox="0 0 17 17" fill="none" stroke="#ddd" strokeWidth="1.300"><circle cx="10.500" cy="6" r="5" /><path d="M7 9.700L.8 16" /></svg>Escribe aquí para buscar</TaskSearch>
        <Grip />
        {taskIcons.map((t, k) => <TaskItem key={k} $open={t.open} $active={t.active}>{t.icon}</TaskItem>)}
        <Tray>
          {trayIcons.map((t, k) => <TrayItem key={k} $w={t.w}>{t.icon}</TrayItem>)}
          <Lang>ESP</Lang>
          <Clock>13:34<br />19/12/2022</Clock>
          <TrayItem $w={32}><svg width="17" height="17" viewBox="0 0 17 17"><path d="M0 1h16v12h-7l-3 3v-3H0z" fill="#fff" /><path d="M2.500 4h11M2.500 7h11M2.500 10h6" stroke="#202020" strokeWidth="1.200" /><circle cx="12" cy="13" r="3.500" fill="#202020" /><path d="M13.500 9a3.800 3.800 0 1 1-4.300 5.300A3.600 3.600 0 0 0 13.500 9z" fill="#fff" /></svg></TrayItem>
          <Gap $w={11} />
          <DesktopEdge />
        </Tray>
      </Taskbar>
    </Screen>
  );
}
